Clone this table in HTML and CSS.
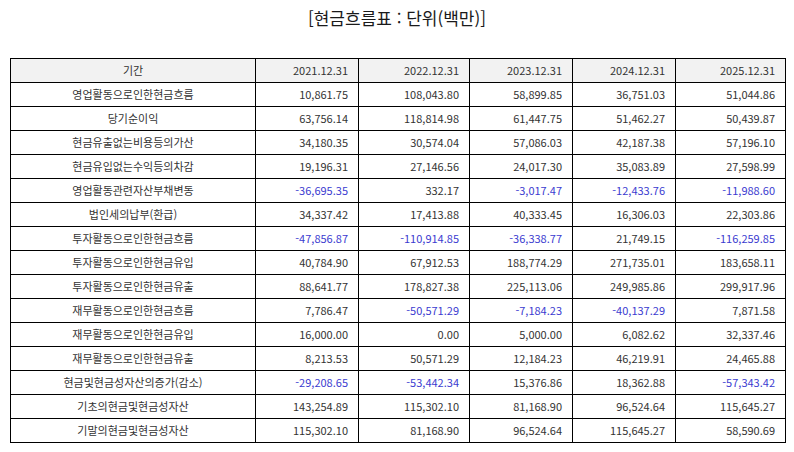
FILE: index.html
```html
<!DOCTYPE html>
<html lang="ko">
<head>
<meta charset="utf-8">
<link rel="stylesheet" href="styles.css">
</head>
<body>
<div class="title">[현금흐름표 : 단위(백만)]</div>
<table class="cf">
<colgroup>
<col class="c0"><col class="c1"><col class="c2"><col class="c3"><col class="c4"><col class="c5">
</colgroup>
<thead>
<tr><th class="lbl">기간</th><th>2021.12.31</th><th>2022.12.31</th><th>2023.12.31</th><th>2024.12.31</th><th>2025.12.31</th></tr>
</thead>
<tbody>
<tr><td class="lbl">영업활동으로인한현금흐름</td><td>10,861.75</td><td>108,043.80</td><td>58,899.85</td><td>36,751.03</td><td>51,044.86</td></tr>
<tr><td class="lbl">당기순이익</td><td>63,756.14</td><td>118,814.98</td><td>61,447.75</td><td>51,462.27</td><td>50,439.87</td></tr>
<tr><td class="lbl">현금유출없는비용등의가산</td><td>34,180.35</td><td>30,574.04</td><td>57,086.03</td><td>42,187.38</td><td>57,196.10</td></tr>
<tr><td class="lbl">현금유입없는수익등의차감</td><td>19,196.31</td><td>27,146.56</td><td>24,017.30</td><td>35,083.89</td><td>27,598.99</td></tr>
<tr><td class="lbl">영업활동관련자산부채변동</td><td class="neg">-36,695.35</td><td>332.17</td><td class="neg">-3,017.47</td><td class="neg">-12,433.76</td><td class="neg">-11,988.60</td></tr>
<tr><td class="lbl">법인세의납부(환급)</td><td>34,337.42</td><td>17,413.88</td><td>40,333.45</td><td>16,306.03</td><td>22,303.86</td></tr>
<tr><td class="lbl">투자활동으로인한현금흐름</td><td class="neg">-47,856.87</td><td class="neg">-110,914.85</td><td class="neg">-36,338.77</td><td>21,749.15</td><td class="neg">-116,259.85</td></tr>
<tr><td class="lbl">투자활동으로인한현금유입</td><td>40,784.90</td><td>67,912.53</td><td>188,774.29</td><td>271,735.01</td><td>183,658.11</td></tr>
<tr><td class="lbl">투자활동으로인한현금유출</td><td>88,641.77</td><td>178,827.38</td><td>225,113.06</td><td>249,985.86</td><td>299,917.96</td></tr>
<tr><td class="lbl">재무활동으로인한현금흐름</td><td>7,786.47</td><td class="neg">-50,571.29</td><td class="neg">-7,184.23</td><td class="neg">-40,137.29</td><td>7,871.58</td></tr>
<tr><td class="lbl">재무활동으로인한현금유입</td><td>16,000.00</td><td>0.00</td><td>5,000.00</td><td>6,082.62</td><td>32,337.46</td></tr>
<tr><td class="lbl">재무활동으로인한현금유출</td><td>8,213.53</td><td>50,571.29</td><td>12,184.23</td><td>46,219.91</td><td>24,465.88</td></tr>
<tr><td class="lbl">현금및현금성자산의증가(감소)</td><td class="neg">-29,208.65</td><td class="neg">-53,442.34</td><td>15,376.86</td><td>18,362.88</td><td class="neg">-57,343.42</td></tr>
<tr><td class="lbl">기초의현금및현금성자산</td><td>143,254.89</td><td>115,302.10</td><td>81,168.90</td><td>96,524.64</td><td>115,645.27</td></tr>
<tr><td class="lbl">기말의현금및현금성자산</td><td>115,302.10</td><td>81,168.90</td><td>96,524.64</td><td>115,645.27</td><td>58,590.69</td></tr>
</tbody>
</table>
</body>
</html>
```
FILE: styles.css
```css
html, body {
  margin: 0;
  padding: 0;
  background: #ffffff;
}
body {
  font-family: "Noto Sans CJK KR", "Noto Sans", sans-serif;
  color: #333333;
}
.title {
  height: 35px;
  line-height: 35px;
  font-size: 17px;
  text-align: center;
  color: #1a1a1a;
  margin-bottom: 23px;
}
.cf {
  margin-left: 10px;
  width: 776px;
  table-layout: fixed;
  border-collapse: collapse;
  font-size: 11px;
}
.c0 { width: 245px; }
.c1 { width: 103px; }
.c2 { width: 111px; }
.c3 { width: 103px; }
.c4 { width: 103px; }
.c5 { width: 110px; }
.cf th, .cf td {
  height: 23px;
  padding: 0 10px 0 4px;
  border: 1px solid #000000;
  text-align: right;
  font-weight: normal;
  white-space: nowrap;
  line-height: 1;
}
.cf thead th {
  background: #f2f2f2;
}
.cf .lbl {
  text-align: center;
  padding: 0 4px;
}
.cf .neg {
  color: #3b3bd0;
}
```
